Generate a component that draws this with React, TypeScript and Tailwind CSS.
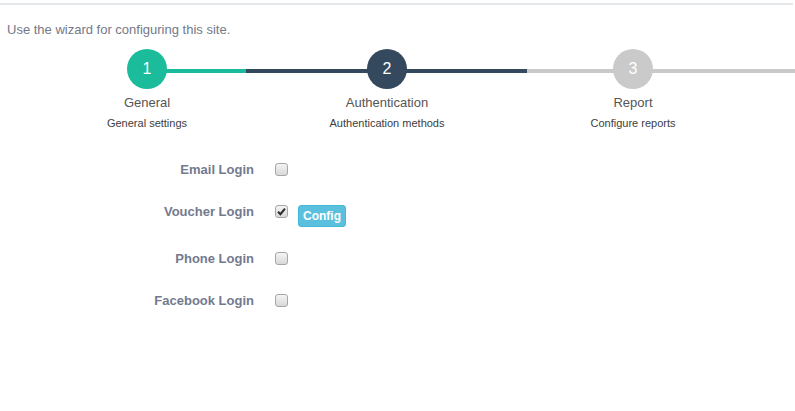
import React, { useState } from 'react';

type Step = { n: number; title: string; sub: string; circle: string; gap: string };

const steps: Step[] = [
  { n: 1, title: 'General', sub: 'General settings', circle: 'bg-[#1abc9c]', gap: '' },
  { n: 2, title: 'Authentication', sub: 'Authentication methods', circle: 'bg-[#34495e]', gap: 'ml-[40px]' },
  { n: 3, title: 'Report', sub: 'Configure reports', circle: 'bg-[#cacaca]', gap: 'ml-[46px]' },
];

const Check: React.FC<{ checked: boolean; onToggle: () => void }> = ({ checked, onToggle }) => (
  <button
    type="button"
    onClick={onToggle}
    className="mt-[3px] w-[13px] h-[13px] shrink-0 rounded-[3px] border border-[#a6a6a6] bg-gradient-to-b from-[#f4f4f4] to-[#d8d8d8] flex items-center justify-center"
  >
    {checked && (
      <svg width="9" height="9" viewBox="0 0 9 9">
        <path d="M1 4.8 L3.4 7.2 L8 1.6" fill="none" stroke="#2b2b2b" strokeWidth="2" />
      </svg>
    )}
  </button>
);

const App: React.FC = () => {
  const [logins, setLogins] = useState([
    { name: 'Email Login', on: false },
    { name: 'Voucher Login', on: true },
    { name: 'Phone Login', on: false },
    { name: 'Facebook Login', on: false },
  ]);

  const toggle = (i: number) =>
    setLogins(prev => prev.map((l, j) => (j === i ? { ...l, on: !l.on } : l)));

  return (
    <div className="w-[795px] h-[411px] bg-white font-['Liberation_Sans',Arial,sans-serif]">
      <div className="pt-[3px]">
        <div className="h-[2px] bg-[#e5e8eb] mr-[2px]" />
      </div>

      <p className="mt-[15px] pl-[7px] text-[13px] leading-[20px] text-[#747987]">
        Use the wizard for configuring this site.
      </p>

      {/* wizard steps */}
      <div className="relative mt-[9px]">
        <div className="absolute top-[20px] left-0 right-0 h-[4px] flex">
          <div className="w-[147px]" />
          <div className="w-[99px] bg-[#1abc9c]" />
          <div className="w-[281px] bg-[#34495e]" />
          <div className="flex-1 bg-[#cacaca]" />
        </div>
        <div className="relative flex pl-[47px]">
          {steps.map(s => (
            <div key={s.n} className={`w-[200px] flex flex-col items-center ${s.gap}`}>
              <div className={`w-10 h-10 rounded-full ${s.circle} flex items-center justify-center text-white text-[16px]`}>
                {s.n}
              </div>
              <div className="mt-[5px] text-[13px] leading-[18px] text-[#555]">{s.title}</div>
              <div className="mt-[3px] text-[11px] leading-[16px] text-[#3d3d3d]">{s.sub}</div>
            </div>
          ))}
        </div>
      </div>

      {/* login methods */}
      <div className="mt-[29px] flex flex-col gap-[22px]">
        {logins.map((l, i) => (
          <div key={l.name} className="flex items-start">
            <label className="w-[254px] text-right text-[13px] leading-[20px] font-bold text-[#737a8e]">{l.name}</label>
            <div className="ml-[21px] flex items-start">
              <Check checked={l.on} onToggle={() => toggle(i)} />
              {l.name === 'Voucher Login' && (
                <button className="ml-[10px] mt-[3px] h-[22px] px-[4px] rounded-[3px] bg-[#5bc0de] border border-[#46b8da] text-white text-[12px] font-bold leading-none">
                  Config
                </button>
              )}
            </div>
          </div>
        ))}
      </div>
    </div>
  );
};

export default App;
